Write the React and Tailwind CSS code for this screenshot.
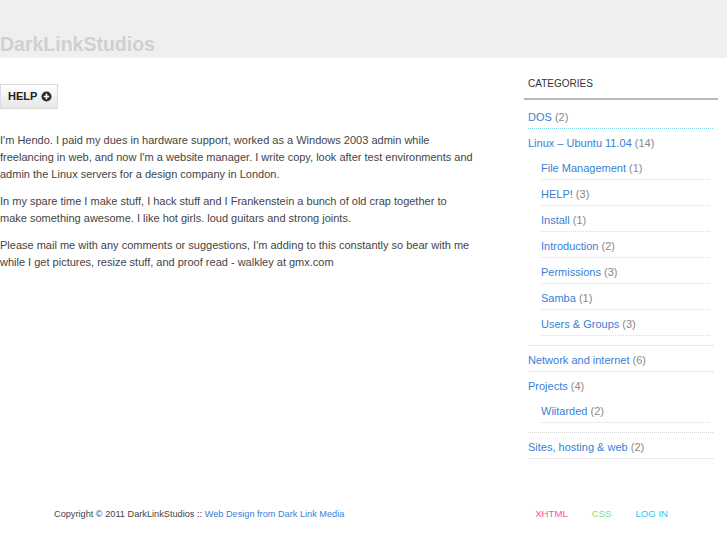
import React from "react";

const categories = [
  { name: "DOS", count: 2, first: true },
  {
    name: "Linux – Ubuntu 11.04",
    count: 14,
    children: [
      { name: "File Management", count: 1 },
      { name: "HELP!", count: 3 },
      { name: "Install", count: 1 },
      { name: "Introduction", count: 2 },
      { name: "Permissions", count: 3 },
      { name: "Samba", count: 1 },
      { name: "Users & Groups", count: 3 },
    ],
  },
  { name: "Network and internet", count: 6 },
  { name: "Projects", count: 4, children: [{ name: "Wiitarded", count: 2 }] },
  { name: "Sites, hosting & web", count: 2 },
];

function CatLink({ name, count }) {
  return (
    <span className="block leading-[16px]">
      <a href="#" className="text-[#3a80d6]">{name}</a>{" "}
      <span className="text-[#888]">({count})</span>
    </span>
  );
}

function Sidebar() {
  return (
    <aside className="ml-[48px] w-[194px] pt-[19px]">
      <div className="border-b-2 border-[#b8b8b8] pb-[7px] pl-[4px]">
        <h3 className="text-[10px] leading-[14px] uppercase text-[#333]">Categories</h3>
      </div>
      <ul className="ml-[4px] mr-[5px] pt-[3px] text-[11px]">
        {categories.map((cat) => (
          <li
            key={cat.name}
            className={
              "border-b border-dotted pt-[6px] pb-[3px] " +
              (cat.first ? "border-[#7fd6ee]" : "border-[#d4d4d4]")
            }
          >
            <CatLink name={cat.name} count={cat.count} />
            {cat.children ? (
              <ul className="mt-[3px] mb-[6px] ml-[13px] mr-[3px]">
                {cat.children.map((child) => (
                  <li key={child.name} className="border-b border-dotted border-[#dcdcdc] pt-[6px] pb-[3px]">
                    <CatLink name={child.name} count={child.count} />
                  </li>
                ))}
              </ul>
            ) : null}
          </li>
        ))}
      </ul>
    </aside>
  );
}

function HelpButton() {
  return (
    <button
      type="button"
      className="flex h-[25px] w-[58px] items-center gap-[4px] border border-[#dcdcdc] bg-gradient-to-b from-white to-[#e6e6e6] pl-[7px] text-[11px] font-bold text-[#222]"
    >
      HELP
      <svg width="11" height="11" viewBox="0 0 12 12">
        <circle cx="6" cy="6" r="5.5" fill="#2b2b2b" />
        <path d="M6 3v6M3 6h6" stroke="#fff" strokeWidth="1.8" />
      </svg>
    </button>
  );
}

export default function App() {
  return (
    <div className="min-h-[545px] bg-white font-['Liberation_Sans',Arial,sans-serif]">
      <header className="h-[58px] bg-[#efefef] pt-[33px]">
        <h1 className="text-[19.5px] font-bold leading-[22px] text-[#d0d0d0]">DarkLinkStudios</h1>
      </header>

      <div className="flex">
        <main className="w-[476px] pt-[26px]">
          <HelpButton />
          <div className="mt-[23px] space-y-[10px] text-[11px] leading-[17px] text-[#444]">
            <p>
              I'm Hendo. I paid my dues in hardware support, worked as a Windows 2003 admin while freelancing in web,
              and now I'm a website manager. I write copy, look after test environments and admin the Linux servers for
              a design company in London.
            </p>
            <p>
              In my spare time I make stuff, I hack stuff and I Frankenstein a bunch of old crap together to make
              something awesome. I like hot girls. loud guitars and strong joints.
            </p>
            <p>
              Please mail me with any comments or suggestions, I'm adding to this constantly so bear with me while I get
              pictures, resize stuff, and proof read - walkley at gmx.com
            </p>
          </div>
        </main>
        <Sidebar />
      </div>

      <footer className="mt-[48px] flex items-center pl-[54px] pr-[59px] leading-[14px]">
        <p className="flex-1 text-[9.2px] text-[#444]">
          Copyright © 2011 DarkLinkStudios :: <a href="#" className="text-[#3a80d6]">Web Design from Dark Link Media</a>
        </p>
        <nav className="flex gap-[24px] text-[9.6px]">
          <a href="#" className="text-[#ff4f9f]">XHTML</a>
          <a href="#" className="text-[#86dd78]">CSS</a>
          <a href="#" className="text-[#35c3ee]">LOG IN</a>
        </nav>
      </footer>
    </div>
  );
}
